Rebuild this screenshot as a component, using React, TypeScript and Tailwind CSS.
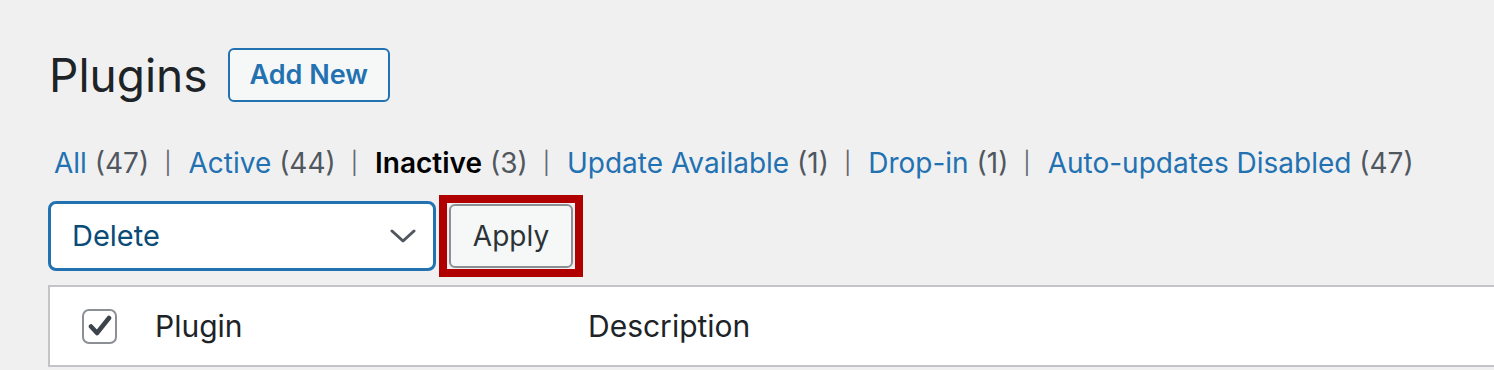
import React from 'react';

const filters = [
  { label: 'All', count: 47 },
  { label: 'Active', count: 44 },
  { label: 'Inactive', count: 3, current: true },
  { label: 'Update Available', count: 1 },
  { label: 'Drop-in', count: 1 },
  { label: 'Auto-updates Disabled', count: 47 },
];

const font = { fontFamily: 'Inter, "Liberation Sans", sans-serif' };

export default function App() {
  return (
    <div className="min-h-screen overflow-hidden bg-[#f0f0f1] pl-[48px] pt-[48px] text-[#3c434a]" style={font}>
      {/* Title */}
      <div className="flex items-center">
        <h1 className="ml-[1px] text-[46px] font-normal leading-[54px] text-[#1d2327]">Plugins</h1>
        <button className="ml-[20px] h-[54px] rounded-[6px] border-2 border-[#2271b1] bg-[#f6f7f7] px-[20px] text-[27px] font-semibold text-[#2271b1]">
          Add New
        </button>
      </div>

      {/* Status filters */}
      <ul className="mt-[41px] flex h-[40px] items-center pl-[6px] text-[28px] leading-[40px]">
        {filters.map((f, i) => (
          <li key={f.label} className="flex items-center whitespace-pre">
            <span className={f.current ? 'font-semibold text-black' : 'text-[#2271b1]'}>{f.label}</span>
            <span className="text-[#50575e]"> ({f.count})</span>
            {i < filters.length - 1 && (
              <span className="pl-[15px] pr-[17px] text-[22px] text-[#646970]">|</span>
            )}
          </li>
        ))}
      </ul>

      {/* Bulk actions */}
      <div className="mt-[12px] flex items-center">
        <div className="flex h-[70px] w-[388px] items-center justify-between rounded-[8px] border-[3px] border-[#2271b1] bg-white pl-[21px] pr-[17px]">
          <span className="text-[29px] text-[#0a4b78]">Delete</span>
          <svg width="26" height="16" viewBox="0 0 26 16" fill="none">
            <path d="M2 3l11 10 11-10" stroke="#50575e" strokeWidth="3" strokeLinecap="round" strokeLinejoin="round" />
          </svg>
        </div>
        <div className="ml-[3px] border-[8px] border-[#b10000] px-[2px] py-[1px]">
          <button className="h-[64px] w-[124px] rounded-[6px] border-2 border-[#8c8f94] bg-[#f6f7f7] text-[28px] text-[#2c3338]">
            Apply
          </button>
        </div>
      </div>

      {/* Table header */}
      <div className="mr-[-20px] mt-[8px] flex h-[82px] items-center border-2 border-[#c3c4c7] bg-white">
        <div className="ml-[32px] flex h-[35px] w-[35px] items-center justify-center rounded-[7px] border-2 border-[#8c8f94]">
          <svg width="24" height="22" viewBox="0 0 24 22" fill="none">
            <path d="M3 11.5l6 6.5L21 3" stroke="#3c434a" strokeWidth="4.5" strokeLinecap="round" strokeLinejoin="round" />
          </svg>
        </div>
        <span className="ml-[38px] w-[433px] text-[30px] text-[#1d2327]">Plugin</span>
        <span className="text-[30px] text-[#1d2327]">Description</span>
      </div>
    </div>
  );
}
